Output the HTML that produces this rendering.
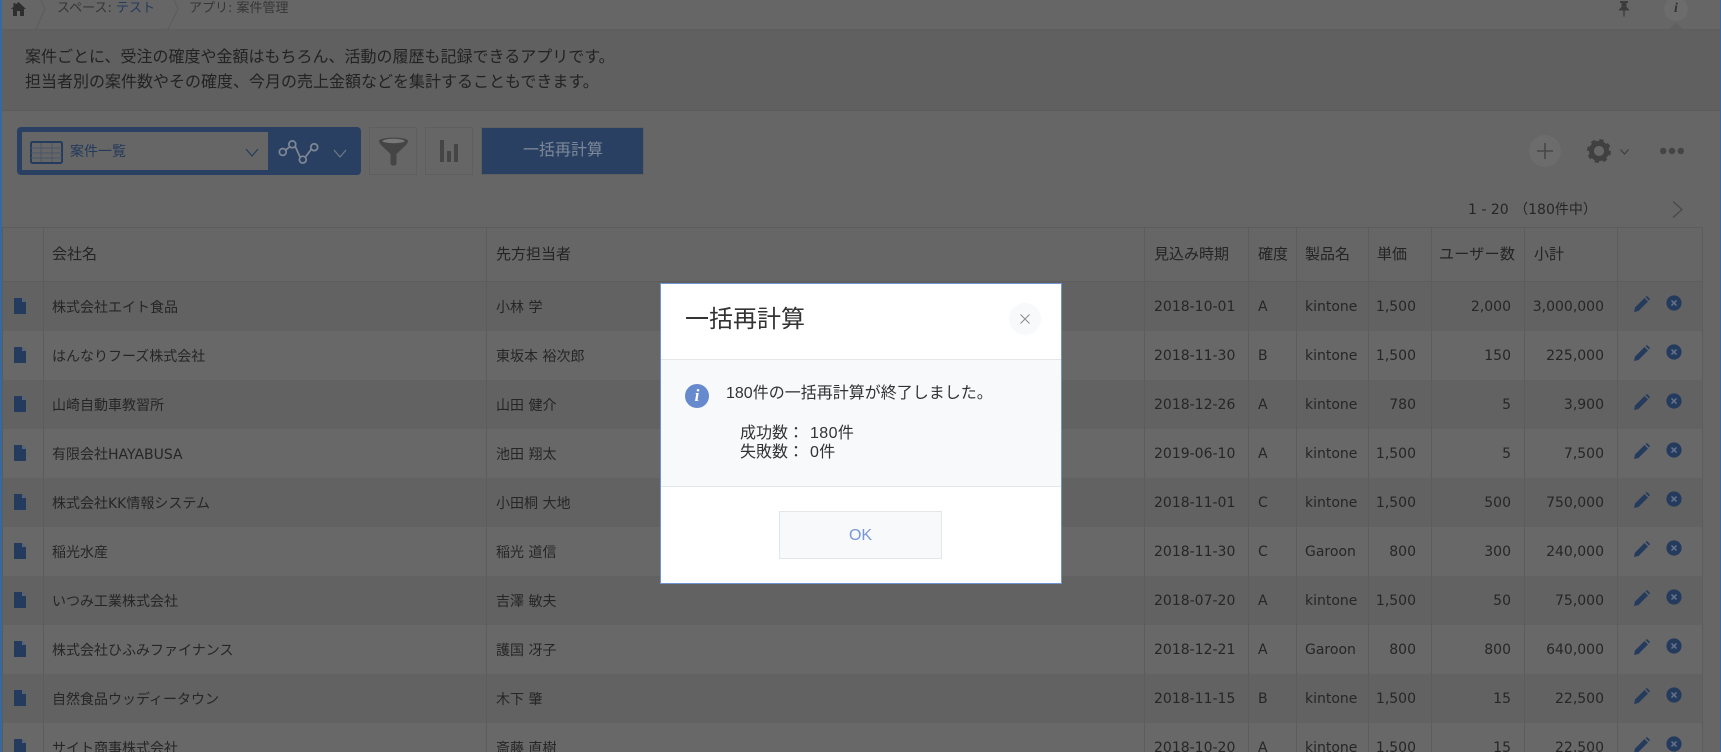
<!DOCTYPE html>
<html lang="ja">
<head>
<meta charset="utf-8">
<title>案件管理</title>
<style>
html,body{margin:0;padding:0;width:1721px;height:752px;overflow:hidden;background:#666;}
body{position:relative;font-family:"DejaVu Sans","Noto Sans CJK JP",sans-serif;color:#262626;font-size:14px;}
.a{position:absolute;white-space:nowrap;}
svg{position:absolute;display:block;overflow:visible;}
table{position:absolute;left:2px;top:227px;width:1701px;table-layout:fixed;border-collapse:separate;border-spacing:0;}
th,td{padding:0 0 0 9px;font-weight:normal;text-align:left;border-left:1px solid #5c5c5c;white-space:nowrap;overflow:hidden;box-sizing:border-box;position:relative;}
tr>*:last-child{border-right:1px solid #5c5c5c;}
th{height:55px;padding-bottom:2px;background:#666;border-top:1px solid #5c5c5c;border-bottom:1px solid #5c5c5c;color:#242424;font-size:15px;}
td{height:49px;}
tr.o td{background:#626262;}
tr.e td{background:#686868;}
tr>*:nth-child(2){padding-left:8px;}
tr>*:nth-child(6),tr>*:nth-child(7){padding-left:8px;}
th:nth-child(8){padding-left:7px;letter-spacing:.3px;}
td.r{text-align:right;padding:0 13px 0 0;}
td.p{padding-right:15px;}
.m{font-family:"Liberation Sans","Noto Sans CJK JP",sans-serif;}
</style>
</head>
<body>
<svg width="0" height="0" style="position:absolute">
<symbol id="file" viewBox="0 0 12 16"><path d="M0 0H8L12 4V16H0Z" fill="#243b5e"/><path d="M8 0L12 4H8Z" fill="#56657c"/></symbol>
<symbol id="pen" viewBox="0 0 16 16"><path d="M0 16L1 11.5L10.5 2L14 5.5L4.5 15Z" fill="#243b5e"/><path d="M11.5 1L13 0L16 3L15 4.5Z" fill="#243b5e"/></symbol>
<symbol id="del" viewBox="0 0 16 16"><circle cx="8" cy="8" r="7.6" fill="#243b5e"/><path d="M5.5 5.5L10.5 10.5M10.5 5.5L5.5 10.5" stroke="#66758c" stroke-width="1.5"/></symbol>
</svg>

<!-- breadcrumb -->
<div class="a" style="left:0;top:0;width:1721px;height:29px;background:#666;"></div>
<svg style="left:11px;top:2px" width="15" height="14" viewBox="0 0 15 14"><path d="M7.5 0L15 7H13V14H9V9H6V14H2V7H0L2.5 4.6V1H4.5V2.8Z" fill="#2e2e2e"/></svg>
<svg style="left:0;top:0" width="200" height="29"><path d="M41 0L45 9L36 29M174 0L178 9L168 29" fill="none" stroke="#5b5b5b"/></svg>
<div class="a" style="left:57px;top:1px;font-size:13px;line-height:16px;color:#363636;">スペース: <span style="color:#243b5e">テスト</span></div>
<div class="a" style="left:189px;top:1px;font-size:13px;line-height:16px;color:#363636;">アプリ: 案件管理</div>
<svg style="left:1618px;top:0" width="12" height="17" viewBox="0 0 12 17"><path d="M2 1H10V3H8.5V7L11 9.5V10.5H6.7V16.5H5.3V10.5H1V9.5L3.5 7V3H2Z" fill="#3c3c3c"/></svg>
<div class="a" style="left:1664px;top:-3px;width:24px;height:24px;border-radius:12px;background:#6c6c6c;"></div>
<div class="a" style="left:1664px;top:-2px;width:24px;text-align:center;font:italic bold 14px/22px 'Liberation Serif',serif;color:#333;">i</div>

<!-- description band -->
<div class="a" style="left:0;top:29px;width:1721px;height:82px;background:#606060;border-top:1px solid #5d5d5d;border-bottom:1px solid #5b5b5b;box-sizing:border-box;"></div>
<svg style="left:1669px;top:22px" width="14" height="8"><path d="M0 7.5L7 0.5L14 7.5Z" fill="#606060"/></svg>
<div class="a" style="left:25px;top:45px;font-size:16px;line-height:25px;color:#222;font-family:'Liberation Sans','Noto Sans CJK JP',sans-serif;">案件ごとに、受注の確度や金額はもちろん、活動の履歴も記録できるアプリです。<br>担当者別の案件数やその確度、今月の売上金額などを集計することもできます。</div>

<!-- left & right frame -->
<div class="a" style="left:0;top:0;width:1.5px;height:752px;background:#38699c;z-index:3"></div>
<div class="a" style="left:1720px;top:0;width:1px;height:752px;background:#38699c;z-index:3"></div>

<!-- view selector -->
<div class="a" style="left:17px;top:127px;width:344px;height:48px;background:#2a4062;border-radius:4px;"></div>
<div class="a" style="left:22px;top:132px;width:246px;height:38px;background:#666;"></div>
<svg style="left:30px;top:141px" width="33" height="23" viewBox="0 0 33 23"><rect x="1" y="1" width="31" height="21" rx="1.5" fill="none" stroke="#243b5e" stroke-width="2"/><path d="M1 7H32M1 12H32M1 17H32M11 2V21M22 2V21" stroke="#48556a" stroke-width="1" fill="none"/></svg>
<div class="a" style="left:70px;top:141px;font-size:14px;line-height:22px;color:#243a5c;">案件一覧</div>
<svg style="left:245px;top:148px" width="14" height="9"><path d="M1 1L7 8L13 1" fill="none" stroke="#243a5c" stroke-width="1.1"/></svg>
<svg style="left:278px;top:139px" width="41" height="25" viewBox="0 0 43 25" fill="none" stroke="#7f8794" stroke-width="1.8"><path d="M8 11L13 7M18 7L23 18M29 18L35 10"/><circle cx="5" cy="13" r="3.6"/><circle cx="15" cy="5" r="3.6"/><circle cx="26" cy="21" r="3.6"/><circle cx="38" cy="8" r="3.6"/></svg>
<svg style="left:333px;top:149px" width="14" height="9"><path d="M1 1L7 8L13 1" fill="none" stroke="#737b88" stroke-width="1.1"/></svg>

<!-- filter -->
<div class="a" style="left:369px;top:127px;width:48px;height:48px;border:1px solid #5e5e5e;box-sizing:border-box;"></div>
<svg style="left:379px;top:137px" width="29" height="29" viewBox="0 0 29 29"><path d="M0 4C0 -0.5 29 -0.5 29 4C29 5 28.5 6 27 8L17.5 17V26C17.5 29.5 11.5 29.5 11.5 26V17L2 8C0.5 6 0 5 0 4Z" fill="#454545"/><ellipse cx="14.5" cy="4" rx="11" ry="2.2" fill="#787878"/></svg>
<!-- chart -->
<div class="a" style="left:425px;top:127px;width:48px;height:48px;border:1px solid #5e5e5e;box-sizing:border-box;"></div>
<svg style="left:440px;top:140px" width="18" height="22"><path d="M0 0H4V22H0ZM7 11H11V22H7ZM14 4H18V22H14Z" fill="#454545"/></svg>
<!-- recalc -->
<div class="a" style="left:481px;top:127px;width:163px;height:48px;background:#2a4062;border:1px solid #5f5f5f;box-sizing:border-box;text-align:center;font-size:16px;line-height:45px;color:#7d8898;padding-left:1px;font-family:'Liberation Sans','Noto Sans CJK JP',sans-serif;">一括再計算</div>

<!-- right tools -->
<div class="a" style="left:1529px;top:135px;width:32px;height:32px;border-radius:16px;background:#6c6c6c;"></div>
<svg style="left:1537px;top:143px" width="16" height="16"><path d="M8 0V16M0 8H16" stroke="#464646" stroke-width="1.6"/></svg>
<svg style="left:1587px;top:139px" width="24" height="24" viewBox="0 0 24 24"><circle cx="12" cy="12" r="7.6" fill="none" stroke="#404040" stroke-width="5"/><circle cx="12" cy="12" r="10.4" fill="none" stroke="#404040" stroke-width="3.2" stroke-dasharray="4.17 4"/></svg>
<svg style="left:1620px;top:149px" width="9" height="6"><path d="M0.5 0.5L4.5 5L8.5 0.5" fill="none" stroke="#404040" stroke-width="1.3"/></svg>
<svg style="left:1660px;top:147px" width="24" height="8"><circle cx="3.2" cy="4" r="3.2" fill="#444"/><circle cx="12" cy="4" r="3.2" fill="#444"/><circle cx="20.8" cy="4" r="3.2" fill="#444"/></svg>

<!-- pagination -->
<div class="a" style="left:1468px;top:199px;font-size:14px;line-height:22px;color:#262626;">1 - 20 <span style="margin-left:1px">（180件中）</span></div>
<svg style="left:1672px;top:201px" width="11" height="17"><path d="M1 0.5L10 8.5L1 16.5" fill="none" stroke="#484848" stroke-width="1.2"/></svg>

<!-- table -->
<table>
<colgroup><col style="width:41px"><col style="width:443px"><col style="width:658px"><col style="width:104px"><col style="width:48px"><col style="width:72px"><col style="width:63px"><col style="width:93px"><col style="width:93px"><col style="width:86px"></colgroup>
<tr><th></th><th>会社名</th><th>先方担当者</th><th>見込み時期</th><th>確度</th><th>製品名</th><th>単価</th><th>ユーザー数</th><th>小計</th><th></th></tr>
<tr class="o"><td><svg style="left:11px;top:16px" width="12" height="16"><use href="#file"/></svg></td><td>株式会社エイト食品</td><td>小林 学</td><td>2018-10-01</td><td>A</td><td>kintone</td><td class="r p">1,500</td><td class="r">2,000</td><td class="r">3,000,000</td><td><svg style="left:16px;top:14px" width="16" height="16"><use href="#pen"/></svg><svg style="left:48px;top:13px" width="16" height="16"><use href="#del"/></svg></td></tr>
<tr class="e"><td><svg style="left:11px;top:16px" width="12" height="16"><use href="#file"/></svg></td><td>はんなりフーズ株式会社</td><td>東坂本 裕次郎</td><td>2018-11-30</td><td>B</td><td>kintone</td><td class="r p">1,500</td><td class="r">150</td><td class="r">225,000</td><td><svg style="left:16px;top:14px" width="16" height="16"><use href="#pen"/></svg><svg style="left:48px;top:13px" width="16" height="16"><use href="#del"/></svg></td></tr>
<tr class="o"><td><svg style="left:11px;top:16px" width="12" height="16"><use href="#file"/></svg></td><td>山崎自動車教習所</td><td>山田 健介</td><td>2018-12-26</td><td>A</td><td>kintone</td><td class="r p">780</td><td class="r">5</td><td class="r">3,900</td><td><svg style="left:16px;top:14px" width="16" height="16"><use href="#pen"/></svg><svg style="left:48px;top:13px" width="16" height="16"><use href="#del"/></svg></td></tr>
<tr class="e"><td><svg style="left:11px;top:16px" width="12" height="16"><use href="#file"/></svg></td><td>有限会社HAYABUSA</td><td>池田 翔太</td><td>2019-06-10</td><td>A</td><td>kintone</td><td class="r p">1,500</td><td class="r">5</td><td class="r">7,500</td><td><svg style="left:16px;top:14px" width="16" height="16"><use href="#pen"/></svg><svg style="left:48px;top:13px" width="16" height="16"><use href="#del"/></svg></td></tr>
<tr class="o"><td><svg style="left:11px;top:16px" width="12" height="16"><use href="#file"/></svg></td><td>株式会社KK情報システム</td><td>小田桐 大地</td><td>2018-11-01</td><td>C</td><td>kintone</td><td class="r p">1,500</td><td class="r">500</td><td class="r">750,000</td><td><svg style="left:16px;top:14px" width="16" height="16"><use href="#pen"/></svg><svg style="left:48px;top:13px" width="16" height="16"><use href="#del"/></svg></td></tr>
<tr class="e"><td><svg style="left:11px;top:16px" width="12" height="16"><use href="#file"/></svg></td><td>稲光水産</td><td>稲光 道信</td><td>2018-11-30</td><td>C</td><td>Garoon</td><td class="r p">800</td><td class="r">300</td><td class="r">240,000</td><td><svg style="left:16px;top:14px" width="16" height="16"><use href="#pen"/></svg><svg style="left:48px;top:13px" width="16" height="16"><use href="#del"/></svg></td></tr>
<tr class="o"><td><svg style="left:11px;top:16px" width="12" height="16"><use href="#file"/></svg></td><td>いつみ工業株式会社</td><td>吉澤 敏夫</td><td>2018-07-20</td><td>A</td><td>kintone</td><td class="r p">1,500</td><td class="r">50</td><td class="r">75,000</td><td><svg style="left:16px;top:14px" width="16" height="16"><use href="#pen"/></svg><svg style="left:48px;top:13px" width="16" height="16"><use href="#del"/></svg></td></tr>
<tr class="e"><td><svg style="left:11px;top:16px" width="12" height="16"><use href="#file"/></svg></td><td>株式会社ひふみファイナンス</td><td>護国 冴子</td><td>2018-12-21</td><td>A</td><td>Garoon</td><td class="r p">800</td><td class="r">800</td><td class="r">640,000</td><td><svg style="left:16px;top:14px" width="16" height="16"><use href="#pen"/></svg><svg style="left:48px;top:13px" width="16" height="16"><use href="#del"/></svg></td></tr>
<tr class="o"><td><svg style="left:11px;top:16px" width="12" height="16"><use href="#file"/></svg></td><td>自然食品ウッディータウン</td><td>木下 肇</td><td>2018-11-15</td><td>B</td><td>kintone</td><td class="r p">1,500</td><td class="r">15</td><td class="r">22,500</td><td><svg style="left:16px;top:14px" width="16" height="16"><use href="#pen"/></svg><svg style="left:48px;top:13px" width="16" height="16"><use href="#del"/></svg></td></tr>
<tr class="e"><td><svg style="left:11px;top:16px" width="12" height="16"><use href="#file"/></svg></td><td>サイト商事株式会社</td><td>斎藤 直樹</td><td>2018-10-20</td><td>A</td><td>kintone</td><td class="r p">1,500</td><td class="r">15</td><td class="r">22,500</td><td><svg style="left:16px;top:14px" width="16" height="16"><use href="#pen"/></svg><svg style="left:48px;top:13px" width="16" height="16"><use href="#del"/></svg></td></tr>
</table>

<!-- modal -->
<div class="a m" style="left:660px;top:283px;width:402px;height:301px;background:#fff;border:1px solid #6f94d2;box-sizing:border-box;color:#333;z-index:5;">
  <div class="a" style="left:24px;top:18px;font-size:24px;line-height:36px;">一括再計算</div>
  <div class="a" style="left:348px;top:19px;width:32px;height:32px;border-radius:16px;background:#f7f9fa;"></div>
  <svg style="left:359px;top:30px" width="10" height="10"><path d="M0.5 0.5L9.5 9.5M9.5 0.5L0.5 9.5" stroke="#8d9294" stroke-width="1.1"/></svg>
  <div class="a" style="left:0;top:75px;width:400px;height:128px;background:#f7f9fa;border-top:1px solid #e3e7e8;border-bottom:1px solid #e3e7e8;box-sizing:border-box;"></div>
  <div class="a" style="left:24px;top:100px;width:24px;height:24px;border-radius:12px;background:#6789cd;"></div>
  <div class="a" style="left:24px;top:100px;width:24px;text-align:center;font:italic bold 17px/24px 'Liberation Serif',serif;color:#fff;">i</div>
  <div class="a" style="left:65px;top:98px;font-size:16px;line-height:24px;">180件の一括再計算が終了しました。</div>
  <div class="a" style="left:79px;top:138px;font-size:16px;line-height:24px;">成功数：</div>
  <div class="a" style="left:149px;top:138px;font-size:16px;line-height:24px;letter-spacing:.4px;">180件</div>
  <div class="a" style="left:79px;top:157px;font-size:16px;line-height:24px;">失敗数：</div>
  <div class="a" style="left:149px;top:157px;font-size:16px;line-height:24px;letter-spacing:.4px;">0件</div>
  <div class="a" style="left:118px;top:227px;width:163px;height:48px;background:#f7f9fa;border:1px solid #e3e7e8;box-sizing:border-box;text-align:center;font-size:16px;line-height:47px;color:#7896dc;">OK</div>
</div>
</body>
</html>
